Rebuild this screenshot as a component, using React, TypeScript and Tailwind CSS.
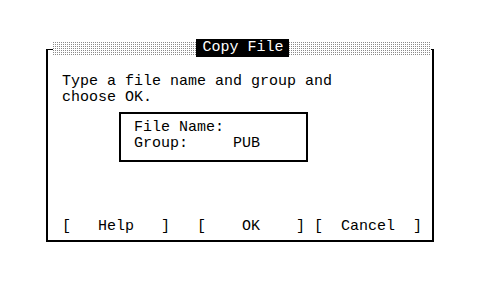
const mono = { fontFamily: '"Liberation Mono", "DejaVu Sans Mono", monospace' }

function Hatch() {
  return (
    <div className="flex-1 h-[14px] bg-[#8a8a8a] bg-[linear-gradient(90deg,transparent_1px,#fff_1px),linear-gradient(transparent_1px,#fff_1px)] bg-[length:2px_2px]" />
  )
}

export default function App() {
  return (
    <div className="w-[488px] h-[288px] bg-white text-black pt-[42px] pl-[46px]" style={mono}>
      <div className="w-[388px]">
        {/* Title bar */}
        <div className="flex h-[14px]">
          <div className="w-[7px] h-[14px] flex flex-col justify-end">
            <div className="h-[7px] border-t border-l-2 border-black" />
          </div>
          <Hatch />
          <div className="self-start -mt-[3px] h-[18px] pl-[7px] pr-[5px] bg-black text-white text-[15px] leading-[18px] whitespace-pre">
            Copy File
          </div>
          <Hatch />
          <div className="w-[3px] h-[14px] flex flex-col justify-end">
            <div className="h-[7px] border-t border-r-2 border-black" />
          </div>
        </div>

        {/* Body */}
        <div className="border-l-2 border-r-2 border-b-2 border-black pt-[18px] pl-[14px] pb-[5px] text-[15px] leading-[16px]">
          <div className="whitespace-pre">Type a file name and group and</div>
          <div className="whitespace-pre">choose OK.</div>

          <div className="mt-[6px] ml-[57px] w-[189px] h-[50px] border-2 border-black pt-[6px] pl-[13px]">
            <div className="whitespace-pre">File Name:</div>
            <div className="whitespace-pre">Group:     PUB</div>
          </div>

          <div className="mt-[57px] whitespace-pre">[   Help   ]   [    OK    ] [  Cancel  ]</div>
        </div>
      </div>
    </div>
  )
}
